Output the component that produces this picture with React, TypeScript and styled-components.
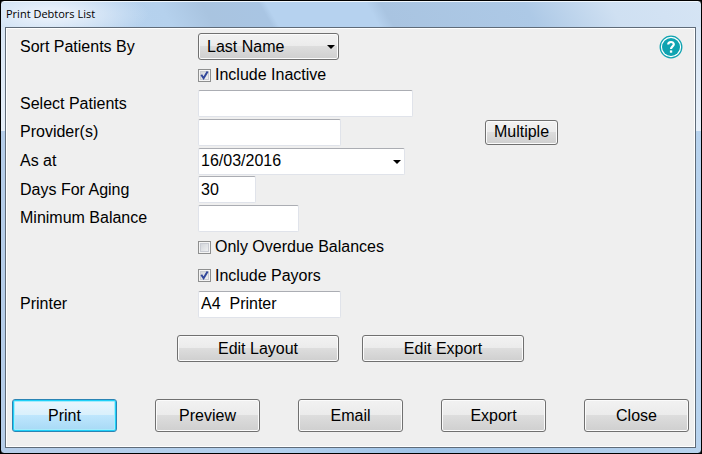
import React, { useId, useState } from "react";
import styled, { createGlobalStyle, css } from "styled-components";

const GlobalStyle = createGlobalStyle`
  *, *::before, *::after { box-sizing: border-box; }
  body { margin: 0; background: #000; }
  body, button, input, select {
    font-family: "Liberation Sans", Arial, sans-serif;
    font-size: 16px;
    color: #000;
  }
`;

const Window = styled.main`
  display: flex;
  flex-direction: column;
  min-height: 100vh;
  padding: 0 5px 5px 4px;
  border: 1px solid #000;
  border-radius: 4px;
  background:
    radial-gradient(ellipse 100px 28px at 48px 13px, #e6effa 20%, #e6effa00) top left / 100% 26px no-repeat,
    linear-gradient(60deg, #c4dbf1 4%, #b6d2ee 18%, #b5d1ed 24%, #a9c4e0 30%, #a9c5e3 38%, #b6d2ef 39%, #b6d2ef 53%, #a9c4e1 55%, #adc9e6 75%, #cfe0f2 87%, #d5e4f4) top / 100% 26px no-repeat,
    linear-gradient(#d5e4f4, #e6eff9) top / 100% 130px no-repeat,
    linear-gradient(90deg, #b5cde9, #b2d0ee 40%, #9fc3e7 60%, #b8d3ee);
  box-shadow: inset 0 1px #f0f7fd;
`;

const TitleBar = styled.header`
  display: flex;
  align-items: center;
  height: 26px;
  padding-left: 1px;
`;

const Title = styled.h1`
  margin: 0;
  font: 11px/16px "Open Sans", "Noto Sans", sans-serif;
`;

const Client = styled.form`
  display: flex;
  flex: 1;
  flex-direction: column;
  padding: 5px 6px 15px;
  border: 1px solid #5f6b78;
  background: #efefef;
  box-shadow: inset 0 0 0 1px #fff;
`;

const Fields = styled.div`
  display: flex;
  flex: 1;
  flex-direction: column;
  justify-content: space-between;
  padding: 0 6px 0 8px;
`;

const Row = styled.div`
  display: grid;
  grid-template-columns: 178px 287px 1fr;
  align-items: center;
  height: 27px;
`;

const Label = styled.label`
  line-height: 24px;
`;

const TextBox = styled.input<{ $width: number }>`
  width: ${(p) => p.$width}px;
  height: 27px;
  padding: 0 2px;
  border: 1px solid #e0e3ea;
  border-top-color: #abadb3;
  border-radius: 2px;
  background: #fff;
  outline: none;
`;

const arrow = css`
  &::after {
    content: "";
    position: absolute;
    right: 4px;
    top: 12px;
    border: 4px solid transparent;
    border-top-color: #000;
    border-bottom: 0;
    pointer-events: none;
  }
`;

const SelectWrap = styled.div`
  position: relative;
  width: 141px;
  ${arrow}
`;

const DateWrap = styled.div`
  position: relative;
  width: 207px;
  ${arrow}
`;

const buttonFace = css`
  border: 1px solid #707070;
  border-radius: 3px;
  background: linear-gradient(#f2f2f2, #ebebeb 49%, #dddddd 50%, #cfcfcf);
  box-shadow: inset 0 0 0 1px #fbfbfb;
`;

const Select = styled.select`
  ${buttonFace}
  appearance: none;
  width: 100%;
  height: 27px;
  padding: 0 8px;
`;

const Button = styled.button<{ $primary?: boolean }>`
  ${buttonFace}
  height: 27px;
  padding: 0;
  ${(p) =>
    p.$primary &&
    css`
      border-color: #2a84b4;
      background: linear-gradient(#eaf6fd, #d9f0fc 49%, #bee6fd 50%, #a7d9f5);
      box-shadow: inset 0 0 0 1px #1fd0f8, inset 0 0 0 2px #a5ecfc;
    `}
`;

const SmallButton = styled(Button)`
  width: 73px;
  height: 25px;
`;

const HelpButton = styled.button`
  display: flex;
  justify-self: end;
  padding: 0;
  border: 0;
  background: none;
`;

const CheckLabel = styled.label`
  display: flex;
  grid-column: 2;
  align-items: center;
  gap: 4px;
  line-height: 24px;
  white-space: nowrap;
`;

const CheckBox = styled.input`
  appearance: none;
  width: 13px;
  height: 13px;
  margin: 0;
  border: 1px solid #8e8f8f;
  background: linear-gradient(135deg, #cbcfd5, #f6f6f6);
  box-shadow: inset 0 0 0 1px #f4f4f4, inset 0 0 0 2px #c9ccd3;
`;

const CheckCell = styled.span`
  display: grid;
  > * { grid-area: 1 / 1; }
  > svg { pointer-events: none; }
`;

const LayoutActions = styled.div`
  display: flex;
  justify-content: center;
  gap: 23px;
  margin-top: 17px;
  > button { width: 162px; }
`;

const Footer = styled.footer`
  display: flex;
  justify-content: space-between;
  margin-top: 37px;
  > button { width: 105px; height: 33px; }
`;

function Check({ label, initial = false }: { label: string; initial?: boolean }) {
  const [checked, setChecked] = useState(initial);
  return (
    <Row>
      <CheckLabel>
        <CheckCell>
          <CheckBox type="checkbox" checked={checked} onChange={(e) => setChecked(e.target.checked)} />
          {checked && (
            <svg width="13" height="13" viewBox="0 0 13 13" fill="none" stroke="#31479b" strokeWidth="2">
              <path d="M3.3 5.8 L5.6 9.2 L9.6 2.6" />
            </svg>
          )}
        </CheckCell>
        {label}
      </CheckLabel>
    </Row>
  );
}

function TextRow({ label, width, value = "", children }: { label: string; width: number; value?: string; children?: React.ReactNode }) {
  const id = useId();
  return (
    <Row>
      <Label htmlFor={id}>{label}</Label>
      <TextBox id={id} $width={width} defaultValue={value} />
      {children}
    </Row>
  );
}

export default function App() {
  return (
    <>
      <GlobalStyle />
      <Window>
        <TitleBar>
          <Title>Print Debtors List</Title>
        </TitleBar>
        <Client onSubmit={(e) => e.preventDefault()}>
          <Fields>
            <Row>
              <Label htmlFor="sort">Sort Patients By</Label>
              <SelectWrap>
                <Select id="sort" defaultValue="Last Name">
                  <option>Last Name</option>
                </Select>
              </SelectWrap>
              <HelpButton type="button" aria-label="Help">
                <svg width="24" height="24" viewBox="0 0 24 24" fill="none">
                  <circle cx="12" cy="12" r="10.8" fill="#fff" stroke="#0fa3b1" strokeWidth="1.3" />
                  <circle cx="12" cy="12" r="9" fill="#0fa3b1" />
                  <path d="M9.2 9.6 C9.2 6.2 14.8 6.2 14.8 9.3 C14.8 11.4 12 11.4 12 14" stroke="#fff" strokeWidth="2.2" />
                  <rect x="10.9" y="15.4" width="2.3" height="2.3" fill="#fff" />
                </svg>
              </HelpButton>
            </Row>
            <Check label="Include Inactive" initial />
            <TextRow label="Select Patients" width={215} />
            <TextRow label="Provider(s)" width={143}>
              <SmallButton type="button">Multiple</SmallButton>
            </TextRow>
            <Row>
              <Label htmlFor="date">As at</Label>
              <DateWrap>
                <TextBox id="date" $width={207} defaultValue="16/03/2016" />
              </DateWrap>
            </Row>
            <TextRow label="Days For Aging" width={58} value="30" />
            <TextRow label="Minimum Balance" width={101} />
            <Check label="Only Overdue Balances" />
            <Check label="Include Payors" initial />
            <TextRow label="Printer" width={143} value={"A4\u00a0 Printer"} />
          </Fields>
          <LayoutActions>
            <Button type="button">Edit Layout</Button>
            <Button type="button">Edit Export</Button>
          </LayoutActions>
          <Footer>
            <Button type="submit" $primary>Print</Button>
            <Button type="button">Preview</Button>
            <Button type="button">Email</Button>
            <Button type="button">Export</Button>
            <Button type="button">Close</Button>
          </Footer>
        </Client>
      </Window>
    </>
  );
}
